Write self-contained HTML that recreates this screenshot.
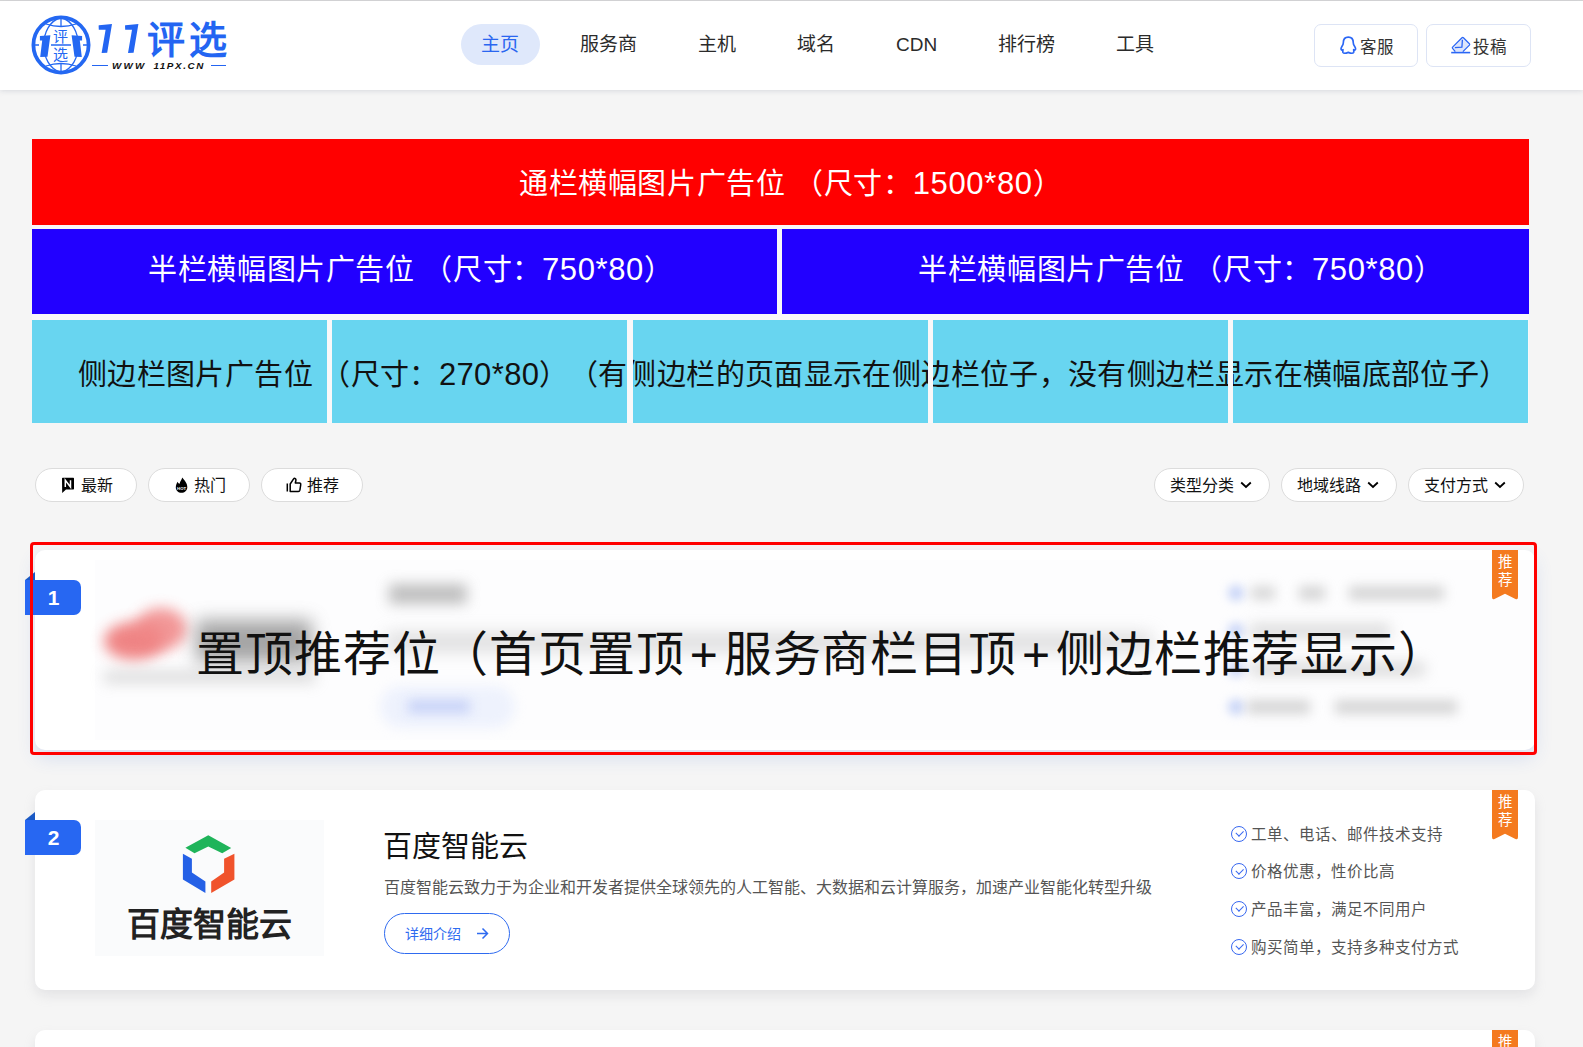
<!DOCTYPE html>
<html lang="zh-CN"><head><meta charset="utf-8">
<style>
*{margin:0;padding:0;box-sizing:border-box}
html,body{width:1583px;height:1047px;overflow:hidden}
body{background:#f5f5f5;font-family:"Liberation Sans",sans-serif;position:relative;color:#222;text-spacing-trim:space-all}
.abs{position:absolute}
#topline{left:0;top:0;width:1583px;height:1px;background:#d6d6d6}
#header{left:0;top:1px;width:1583px;height:89px;background:#fff;box-shadow:0 1px 5px rgba(180,185,195,.45)}
.nav{position:absolute;top:24px;height:41px;line-height:41px;font-size:19px;color:#2b2b2b;white-space:nowrap}
.nav.active{background:#dfe8fb;color:#2a66f0;border-radius:21px;padding:0 20px;width:79px}
.hbtn{position:absolute;top:24px;height:43px;border:1px solid #dde4f5;border-radius:7px;background:#fff}
.hbtn span{position:absolute;font-size:16.5px;color:#333;line-height:20px;top:12px}
.banner{position:absolute;color:#fff;text-align:center;white-space:nowrap}
.pill{position:absolute;top:468px;height:34px;border:1px solid #dcdcdc;border-radius:17px;background:#fff}
.pill span{position:absolute;font-size:16px;color:#111;line-height:20px;top:7px;white-space:nowrap}
.card{position:absolute;left:35px;width:1500px;height:200px;background:#fff;border-radius:10px;box-shadow:0 6px 12px rgba(160,160,170,.2)}
.badge{position:absolute;left:25px;width:56px;height:35px;background:#2767f2;border-radius:0 7px 7px 0;color:#fff;font-weight:bold;font-size:21px;text-align:center;line-height:36px;padding-left:1px}
.fold{position:absolute;left:25px;width:10px;height:8px}
.ribbon{position:absolute;left:1492px;width:26px}
.feat{position:relative;padding-left:21px}
.chk{position:absolute;left:1px;top:10px;width:16px;height:16px;border:1.8px solid #3868f0;border-radius:50%}
.chk:after{content:"";position:absolute;left:3.6px;top:3.3px;width:6px;height:3.5px;border-left:1.8px solid #3868f0;border-bottom:1.8px solid #3868f0;transform:rotate(-45deg)}
</style></head><body>
<div id="topline" class="abs"></div>
<div id="header" class="abs"></div>

<!-- logo -->
<svg class="abs" style="left:28px;top:12px" width="66" height="66" viewBox="28 12 66 66">
  <g fill="none" stroke="#2468f2">
    <circle cx="61" cy="45" r="27.6" stroke-width="3.8"/>
    <path d="M61 17.5 C 38 24, 38 66, 61 72.5 M61 17.5 C 84 24, 84 66, 61 72.5" stroke-width="1.3"/>
    <path d="M46 24 Q61 29 76 24 M46 66 Q61 61 76 66" stroke-width="1.3"/>
    <path d="M34.5 45 H39 M51 45 H71 M83 45 H87.5" stroke-width="1.4"/>
    <path d="M61 18 V26 M61 64 V72" stroke-width="1.3"/>
  </g>
  <g fill="#2468f2">
    <path d="M39.9 36.1 L50.4 35.2 L47.5 56.7 L40.2 56.9 L42.2 40.5 L39.9 40.6 Z"/>
    <path d="M82.1 36.1 L71.6 35.2 L74.5 56.7 L81.8 56.9 L79.8 40.5 L82.1 40.6 Z"/>
  </g>
  <text x="60.5" y="42" font-size="15" fill="#2468f2" text-anchor="middle" font-weight="300">评</text>
  <text x="60.5" y="60" font-size="15" fill="#2468f2" text-anchor="middle" font-weight="300">选</text>
</svg>
<svg class="abs" style="left:94px;top:20px" width="50" height="36" viewBox="94 20 50 36">
  <path d="M98.6 25.6 Q98.7 25.4 99 25.3 L112 24.1 L107.2 52.8 L101.6 53 L105.6 29.8 L98.8 29.8 Z" fill="#2365f2"/>
  <path d="M125 25.6 Q125.1 25.4 125.4 25.3 L138.4 24.1 L133.6 52.8 L128 53 L132 29.8 L125.2 29.8 Z" fill="#2365f2"/>
</svg>
<div class="abs" style="left:146.5px;top:14.5px;font-size:38px;font-weight:bold;color:#2365f2;white-space:nowrap;line-height:50px;letter-spacing:4.5px">评选</div>
<div class="abs" style="left:92px;top:64.5px;width:15.5px;height:1.6px;background:#2365f2"></div>
<div class="abs" style="left:210.5px;top:64.5px;width:15.5px;height:1.6px;background:#2365f2"></div>
<div class="abs" style="left:112px;top:60px;font-size:9.8px;font-weight:bold;font-style:italic;letter-spacing:2.2px;color:#111;line-height:11px;white-space:nowrap">WWW</div><div class="abs" style="left:153.5px;top:60px;font-size:9.8px;font-weight:bold;font-style:italic;letter-spacing:1.6px;color:#111;line-height:11px;white-space:nowrap">11PX.CN</div>
<!-- nav -->
<div class="nav active" style="left:461px">主页</div>
<div class="nav" style="left:580px">服务商</div>
<div class="nav" style="left:698px">主机</div>
<div class="nav" style="left:797px">域名</div>
<div class="nav" style="left:896px">CDN</div>
<div class="nav" style="left:998px">排行榜</div>
<div class="nav" style="left:1116px">工具</div>

<!-- header buttons -->
<div class="hbtn" style="left:1314px;width:104px">
  <svg class="abs" style="left:25.2px;top:11.2px" width="16.6" height="18.6" viewBox="0 0 18 20" preserveAspectRatio="none">
    <path d="M9 1.2 C5.2 1.2 3.6 4.2 3.6 7.2 C3.6 8.6 3.3 9.4 2.2 11 C1.2 12.5 1 14.4 1.6 15 C2.1 15.4 2.7 15 3.2 14.6 C3.2 15.6 2.8 16.6 3.2 17.6 C3.8 18.8 6.5 18.6 9 17.6 C11.5 18.6 14.2 18.8 14.8 17.6 C15.2 16.6 14.8 15.6 14.8 14.6 C15.3 15 15.9 15.4 16.4 15 C17 14.4 16.8 12.5 15.8 11 C14.7 9.4 14.4 8.6 14.4 7.2 C14.4 4.2 12.8 1.2 9 1.2 Z" fill="none" stroke="#2a66f5" stroke-width="1.8" stroke-linejoin="round"/>
  </svg>
  <span style="left:45px">客服</span>
</div>
<div class="hbtn" style="left:1426px;width:105px">
  <span style="left:46px">投稿</span>
</div>
<svg class="abs" style="left:1445px;top:30px" width="30" height="30" viewBox="1445 30 30 30">
  <path d="M1453.2 47.6 L1462.6 38.3 L1469 44.6 L1463.2 51.7 L1455.6 51.7 Z" fill="#dde5fb"/>
  <path d="M1455.3 51.6 L1452.6 48.4 Q1452 47.7 1452.6 47.1 L1462 37.8 Q1462.7 37.1 1463.4 37.8 L1469.4 43.8 Q1470 44.4 1469.4 45.1 L1462.9 51.6" fill="none" stroke="#2a66f5" stroke-width="1.3" stroke-linejoin="round"/>
  <path d="M1462.4 39.8 L1461.9 47.1 L1454.9 47.6" fill="none" stroke="#2a66f5" stroke-width="1.3"/>
  <path d="M1451.2 52.6 H1470.2" stroke="#2a66f5" stroke-width="1.6"/>
</svg>

<!-- banners -->
<div class="abs" style="left:32px;top:139px;width:1497px;height:284px;background:#f9f8f9"></div>
<div class="abs" style="left:32px;top:139px;width:1497px;height:86px;background:#ff0000"></div><div class="banner" style="left:519px;top:140.5px;font-size:29px;letter-spacing:0.62px;line-height:86px">通栏横幅图片广告位 （尺寸：<span style="font-size:31px">1500*80</span>）</div>
<div class="abs" style="left:32px;top:229px;width:745px;height:85px;background:#2200ff"></div><div class="banner" style="left:148px;top:227px;font-size:29px;letter-spacing:0.63px;line-height:85px">半栏横幅图片广告位 （尺寸：<span style="font-size:31px">750*80</span>）</div>
<div class="abs" style="left:782px;top:229px;width:747px;height:85px;background:#2200ff"></div><div class="banner" style="left:918px;top:227px;font-size:29px;letter-spacing:0.63px;line-height:85px">半栏横幅图片广告位 （尺寸：<span style="font-size:31px">750*80</span>）</div>
<div class="abs" style="left:32px;top:320px;width:1496px;height:103px;background:#68d5f0"></div>
<div class="banner" style="left:78px;top:322.5px;font-size:29px;letter-spacing:0.37px;line-height:103px;color:#111">侧边栏图片广告位 （尺寸：<span style="font-size:31px">270*80</span>）（有侧边栏的页面显示在侧边栏位子，没有侧边栏显示在横幅底部位子）</div>
<div class="abs" style="left:327px;top:320px;width:5px;height:103px;background:#f9f8f9"></div>
<div class="abs" style="left:627px;top:320px;width:6px;height:103px;background:#f9f8f9"></div>
<div class="abs" style="left:928px;top:320px;width:5px;height:103px;background:#f9f8f9"></div>
<div class="abs" style="left:1228px;top:320px;width:5px;height:103px;background:#f9f8f9"></div>

<!-- filter pills -->
<div class="pill" style="left:35px;width:102px">
  <svg class="abs" style="left:25px;top:8px" width="14" height="17" viewBox="0 0 14 17">
    <path d="M1 1.5 Q1 .8 1.7 .8 H12.3 Q13 .8 13 1.5 V11.8 Q13 12.5 12.3 12.5 H5 L1.2 16 Z" fill="#000"/>
    <path d="M4.3 10 V3.3 L9.5 10 V3.3" fill="none" stroke="#fff" stroke-width="1.5"/>
  </svg>
  <span style="left:45px">最新</span>
</div>
<div class="pill" style="left:148px;width:102px">
  <svg class="abs" style="left:26px;top:7px" width="13" height="17" viewBox="0 0 13 17">
    <path d="M7.3 1.6 C9 4 12.5 7 12.3 11.5 C12.2 14.5 9.6 16.8 6.5 16.8 C3.3 16.8 0.8 14.5 0.8 11.5 C0.8 9 1.8 7.2 2.5 5.8 C3 7 3.8 7.8 4.7 7.8 C5 5.5 6.5 4 7.3 1.6 Z" fill="#000"/>
    <text x="6.6" y="13.6" font-size="4.4" font-weight="bold" fill="#fff" text-anchor="middle" font-family="Liberation Sans" textLength="9" lengthAdjust="spacingAndGlyphs">HOT</text>
  </svg>
  <span style="left:45px">热门</span>
</div>
<div class="pill" style="left:261px;width:102px">
  <svg class="abs" style="left:24px;top:8px" width="16" height="16" viewBox="0 0 16 16">
    <path d="M1.3 6.5 V14.5 M4.2 14.5 V7 L7.6 1.9 Q8.3 1 9.3 1.6 Q10.2 2.2 9.9 3.5 L9.3 6 H13.4 Q15 6.2 14.7 7.8 L13.9 13.2 Q13.6 14.5 12.3 14.5 Z" fill="none" stroke="#000" stroke-width="1.5" stroke-linejoin="round"/>
  </svg>
  <span style="left:45px">推荐</span>
</div>
<div class="pill" style="left:1154px;width:116px">
  <span style="left:15px">类型分类</span>
  <svg class="abs" style="left:85px;top:11.5px" width="12" height="8" viewBox="0 0 12 8"><path d="M1.2 1.5 L6 6 L10.8 1.5" fill="none" stroke="#000" stroke-width="1.8"/></svg>
</div>
<div class="pill" style="left:1281px;width:116px">
  <span style="left:15px">地域线路</span>
  <svg class="abs" style="left:85px;top:11.5px" width="12" height="8" viewBox="0 0 12 8"><path d="M1.2 1.5 L6 6 L10.8 1.5" fill="none" stroke="#000" stroke-width="1.8"/></svg>
</div>
<div class="pill" style="left:1408px;width:116px">
  <span style="left:15px">支付方式</span>
  <svg class="abs" style="left:85px;top:11.5px" width="12" height="8" viewBox="0 0 12 8"><path d="M1.2 1.5 L6 6 L10.8 1.5" fill="none" stroke="#000" stroke-width="1.8"/></svg>
</div>

<!-- card 1 (blurred, with overlay) -->
<div class="card" style="top:550px;box-shadow:0 8px 18px rgba(70,110,220,.16)"></div>
<div class="abs" style="left:95px;top:560px;width:1440px;height:180px;background:#fdfdfe"></div>
<div class="abs" style="left:104px;top:622px;width:60px;height:38px;background:#ee7878;border-radius:50%;filter:blur(7px);opacity:.9"></div>
<div class="abs" style="left:135px;top:608px;width:52px;height:42px;background:#f08585;border-radius:50%;filter:blur(7px);opacity:.85"></div>
<div class="abs" style="left:196px;top:620px;width:116px;height:42px;background:#888;filter:blur(9px);opacity:.75"></div>
<div class="abs" style="left:104px;top:670px;width:212px;height:14px;background:#aaa;filter:blur(7px);opacity:.35"></div>
<div class="abs" style="left:389px;top:584px;width:78px;height:20px;background:#aaa;filter:blur(7px);opacity:.75"></div>
<div class="abs" style="left:386px;top:634px;width:766px;height:16px;background:#bbb;filter:blur(9px);opacity:.55"></div>
<div class="abs" style="left:380px;top:686px;width:135px;height:42px;background:#eef2fd;border-radius:21px;filter:blur(6px)"></div>
<div class="abs" style="left:408px;top:700px;width:62px;height:13px;background:#c3cff7;filter:blur(6px);opacity:.9"></div>
<div class="abs" style="left:1228px;top:585px;width:16px;height:16px;background:#c9d5f7;border-radius:50%;filter:blur(5px)"></div>
<div class="abs" style="left:1251px;top:586px;width:24px;height:14px;background:#bbb;filter:blur(6px);opacity:.55"></div><div class="abs" style="left:1299px;top:586px;width:26px;height:14px;background:#bbb;filter:blur(6px);opacity:.6"></div><div class="abs" style="left:1349px;top:586px;width:95px;height:14px;background:#bbb;filter:blur(6px);opacity:.6"></div>
<div class="abs" style="left:1228px;top:623px;width:16px;height:16px;background:#c9d5f7;border-radius:50%;filter:blur(5px)"></div>
<div class="abs" style="left:1250px;top:624px;width:140px;height:14px;background:#bbb;filter:blur(7px);opacity:.5"></div>
<div class="abs" style="left:1228px;top:661px;width:16px;height:16px;background:#c9d5f7;border-radius:50%;filter:blur(5px)"></div>
<div class="abs" style="left:1250px;top:662px;width:175px;height:14px;background:#bbb;filter:blur(7px);opacity:.5"></div>
<div class="abs" style="left:1228px;top:699px;width:16px;height:16px;background:#c9d5f7;border-radius:50%;filter:blur(5px)"></div>
<div class="abs" style="left:1247px;top:700px;width:63px;height:14px;background:#bbb;filter:blur(6px);opacity:.6"></div><div class="abs" style="left:1335px;top:700px;width:122px;height:14px;background:#bbb;filter:blur(6px);opacity:.6"></div>
<div class="badge" style="top:580px">1</div>
<svg class="fold abs" style="top:572px" width="10" height="8" viewBox="0 0 10 8"><path d="M0 8 L10 0 V8 Z" fill="#1a59c4"/></svg>
<svg class="ribbon abs" style="top:550px" width="26" height="50" viewBox="0 0 26 50"><path d="M0 0 H26 V47 Q26 50 23.5 49 L13 43.8 L2.5 49 Q0 50 0 47 Z" fill="#f47a1f"/></svg>
<div class="abs" style="left:1492px;top:553px;width:26px;font-size:14.5px;line-height:18px;color:#fff;text-align:center">推<br>荐</div>
<div class="abs" style="left:30px;top:542px;width:1507px;height:213px;border:3px solid #f00;border-radius:4px"></div>
<div class="abs" style="left:196px;top:624.5px;font-size:48px;letter-spacing:0.88px;line-height:60px;color:#111;white-space:nowrap">置顶推荐位（首页置顶<span style="margin:0 5px">+</span>服务商栏目顶<span style="margin:0 5px">+</span>侧边栏推荐显示）</div>

<!-- card 2 -->
<div class="card" style="top:790px"></div>
<div class="abs" style="left:95px;top:820px;width:229px;height:136px;background:#fafbfc"></div>
<svg class="abs" style="left:180px;top:832px" width="58" height="64" viewBox="180 832 58 64">
  <path d="M208.3 835.2 L231.2 848.1 L222.2 853.3 L208.3 846.4 L194.5 853.3 L185.4 847.7 Z" fill="#1fb45a"/>
  <path d="M182.9 853.8 L191.9 858.7 L191.9 872.6 L205.4 881.6 L205.4 892.9 L182.9 879.6 Z" fill="#2460e6"/>
  <path d="M234.4 853.8 L234.4 879.6 L211.2 892.9 L211.2 881.6 L224.1 872.6 L224.1 858.7 Z" fill="#f0532c"/>
</svg>
<div class="abs" style="left:127px;top:901px;font-size:33px;line-height:48px;font-weight:900;color:#222;white-space:nowrap">百度智能云</div>
<div class="abs" style="left:383px;top:827px;font-size:29px;line-height:40px;color:#111;white-space:nowrap">百度智能云</div>
<div class="abs" style="left:384px;top:877px;font-size:16px;line-height:22px;color:#555;white-space:nowrap">百度智能云致力于为企业和开发者提供全球领先的人工智能、大数据和云计算服务，加速产业智能化转型升级</div>
<div class="abs" style="left:384px;top:913px;width:126px;height:41px;border:1px solid #2f6bf0;border-radius:21px"></div>
<div class="abs" style="left:405px;top:924px;font-size:14px;line-height:20px;color:#2f6bf0;white-space:nowrap">详细介绍</div>
<svg class="abs" style="left:476px;top:927px" width="13" height="13" viewBox="0 0 13 13"><path d="M1 6.5 H11.5 M6.5 1.5 L11.5 6.5 L6.5 11.5" fill="none" stroke="#2f6bf0" stroke-width="1.5"/></svg>
<div class="abs" style="left:1230px;top:815.5px;font-size:15.5px;line-height:37.7px;color:#555;white-space:nowrap">
  <div class="feat"><i class="chk"></i>工单、电话、邮件技术支持</div>
  <div class="feat"><i class="chk"></i>价格优惠，性价比高</div>
  <div class="feat"><i class="chk"></i>产品丰富，满足不同用户</div>
  <div class="feat"><i class="chk"></i>购买简单，支持多种支付方式</div>
</div>
<div class="badge" style="top:820px">2</div>
<svg class="fold abs" style="top:812px" width="10" height="8" viewBox="0 0 10 8"><path d="M0 8 L10 0 V8 Z" fill="#1a59c4"/></svg>
<svg class="ribbon abs" style="top:790px" width="26" height="50" viewBox="0 0 26 50"><path d="M0 0 H26 V47 Q26 50 23.5 49 L13 43.8 L2.5 49 Q0 50 0 47 Z" fill="#f47a1f"/></svg>
<div class="abs" style="left:1492px;top:793px;width:26px;font-size:14.5px;line-height:18px;color:#fff;text-align:center">推<br>荐</div>

<!-- card 3 -->
<div class="card" style="top:1030px"></div>
<svg class="ribbon abs" style="top:1030px" width="26" height="50" viewBox="0 0 26 50"><path d="M0 0 H26 V47 Q26 50 23.5 49 L13 43.8 L2.5 49 Q0 50 0 47 Z" fill="#f47a1f"/></svg>
<div class="abs" style="left:1492px;top:1033px;width:26px;font-size:14.5px;line-height:18px;color:#fff;text-align:center">推<br>荐</div>
</body></html>
